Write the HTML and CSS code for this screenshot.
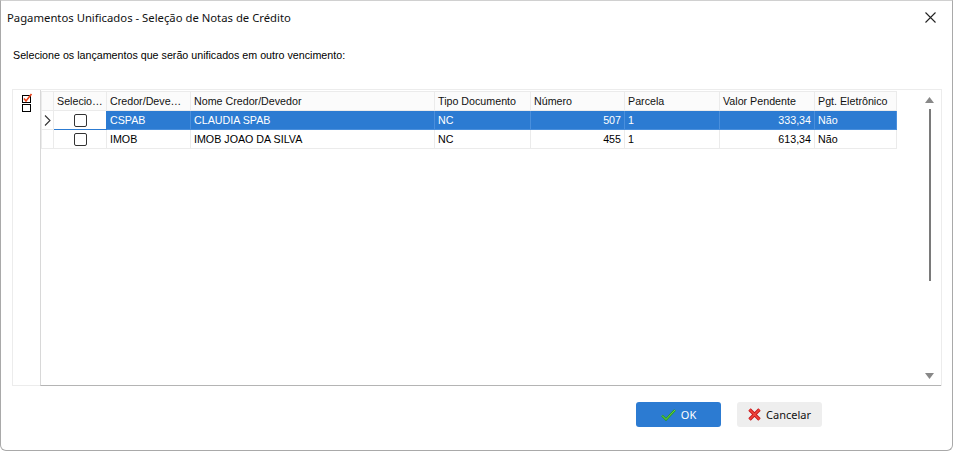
FILE: index.html
```html
<!DOCTYPE html>
<html lang="pt-BR">
<head>
    <meta charset="UTF-8">
    <title>Pagamentos Unificados - Seleção de Notas de Crédito</title>
    <link rel="stylesheet" href="styles.css">
</head>
<body>
    <div class="window">
        <div class="titlebar">
            <span class="title">Pagamentos Unificados - Seleção de Notas de Crédito</span>
            <span class="close">
                <svg width="11" height="11" viewBox="0 0 11 11"><path d="M0.5 0.5 L10.5 10.5 M10.5 0.5 L0.5 10.5" stroke="#222" stroke-width="1.1"/></svg>
            </span>
        </div>
        <div class="prompt">Selecione os lançamentos que serão unificados em outro vencimento:</div>

        <div class="panel">
            <div class="marks">
                <svg width="11" height="20" viewBox="0 0 11 20">
                    <rect x="0.5" y="2.5" width="8" height="7" fill="#fff" stroke="#000"/>
                    <path d="M2 5.5 L4 8 L9.5 1" fill="none" stroke="#e8431a" stroke-width="1.6"/>
                    <rect x="0.5" y="11.5" width="8" height="7" fill="#fff" stroke="#000"/>
                </svg>
            </div>
            <div class="grid">
                <table class="records">
                    <colgroup>
                        <col class="c-ind"><col class="c-sel"><col class="c-cred"><col class="c-nome">
                        <col class="c-tipo"><col class="c-num"><col class="c-parc"><col class="c-valor"><col class="c-pgt">
                    </colgroup>
                    <tr class="head">
                        <th></th>
                        <th>Selecio…</th>
                        <th>Credor/Deve…</th>
                        <th>Nome Credor/Devedor</th>
                        <th>Tipo Documento</th>
                        <th>Número</th>
                        <th>Parcela</th>
                        <th>Valor Pendente</th>
                        <th>Pgt. Eletrônico</th>
                    </tr>
                    <tr class="selected">
                        <td class="ind">
                            <svg width="7" height="11" viewBox="0 0 7 11"><path d="M1 0.5 L6 5.5 L1 10.5" fill="none" stroke="#333" stroke-width="1.1"/></svg>
                        </td>
                        <td class="chk focus"><span class="box"></span></td>
                        <td>CSPAB</td>
                        <td>CLAUDIA SPAB</td>
                        <td>NC</td>
                        <td class="num">507</td>
                        <td>1</td>
                        <td class="num">333,34</td>
                        <td>Não</td>
                    </tr>
                    <tr>
                        <td class="ind"></td>
                        <td class="chk"><span class="box"></span></td>
                        <td>IMOB</td>
                        <td>IMOB JOAO DA SILVA</td>
                        <td>NC</td>
                        <td class="num">455</td>
                        <td>1</td>
                        <td class="num">613,34</td>
                        <td>Não</td>
                    </tr>
                </table>
                <div class="scrollbar">
                    <svg width="9" height="6" viewBox="0 0 9 6"><path d="M4.5 0 L9 6 L0 6 Z" fill="#888"/></svg>
                    <div class="thumb"></div>
                    <svg class="down" width="9" height="6" viewBox="0 0 9 6"><path d="M0 0 L9 0 L4.5 6 Z" fill="#888"/></svg>
                </div>
            </div>
        </div>

        <div class="actions">
            <button class="btn btn-ok">
                <svg width="15" height="12" viewBox="0 0 15 12"><path d="M1 6.5 L5 10.5 L14 1" fill="none" stroke="#2a9a1e" stroke-width="2.4"/><path d="M1 6.5 L5 10.5 L14 1" fill="none" stroke="#6fdc4a" stroke-width="0.9"/></svg>
                OK
            </button>
            <button class="btn btn-cancel">
                <svg width="13" height="13" viewBox="0 0 13 13"><path d="M1.5 1.5 L11.5 11.5 M11.5 1.5 L1.5 11.5" stroke="#c4161c" stroke-width="3.4"/><path d="M1.5 1.5 L11.5 11.5 M11.5 1.5 L1.5 11.5" stroke="#f0473c" stroke-width="1.6"/></svg>
                Cancelar
            </button>
        </div>
    </div>
</body>
</html>
```

FILE: styles.css
```css
body {
    margin: 0;
    padding: 0;
    background-color: #ffffff;
    font-family: "Liberation Sans", Arial, sans-serif;
    font-size: 10.7px;
    color: #000;
}
.window {
    width: 953px;
    height: 451px;
    box-sizing: border-box;
    border: 1px solid #a9a9a9;
    border-top-color: #d0d0d0;
    border-radius: 0 0 6px 6px;
    background-color: #fff;
}
.titlebar {
    height: 33px;
    display: flex;
    align-items: center;
    justify-content: space-between;
    padding: 0 16px 0 6px;
}
.title {
    font-family: "Noto Sans", "Open Sans", sans-serif;
    font-size: 11.3px;
    color: #111;
}
.close {
    display: flex;
}
.prompt {
    margin: 15px 0 0 12px;
    height: 14px;
}
.panel {
    margin: 26px 0 0 11px;
    width: 930px;
    height: 297px;
    box-sizing: border-box;
    border: 1px solid #ececec;
    display: flex;
}
.marks {
    width: 27px;
    padding: 3px 0 0 9px;
    box-sizing: border-box;
}
.grid {
    flex: 1;
    display: flex;
    border-left: 1px solid #d8d8d8;
    border-bottom: 1px solid #b4b4b4;
    margin-bottom: -1px;
    padding-top: 1px;
}
.records {
    border-collapse: collapse;
    table-layout: fixed;
    width: 855px;
    align-self: flex-start;
}
.c-ind { width: 12px; }
.c-sel { width: 53px; }
.c-cred { width: 84px; }
.c-nome { width: 244px; }
.c-tipo { width: 96px; }
.c-num { width: 94px; }
.c-parc { width: 95px; }
.c-valor { width: 95px; }
.c-pgt { width: 82px; }
.records th, .records td {
    height: 18px;
    padding: 0 3px;
    border: 1px solid #ebebeb;
    text-align: left;
    font-weight: normal;
    white-space: nowrap;
    overflow: hidden;
}
.records th {
    background-color: #fbfbfb;
    color: #111;
}
.records td.num {
    text-align: right;
}
.records td.ind {
    padding: 0 0 0 2px;
    border-right-color: #ebebeb;
}
.records td.ind svg {
    display: block;
}
.records td.chk {
    text-align: center;
}
.box {
    display: inline-block;
    width: 11px;
    height: 11px;
    border: 1px solid #333;
    border-radius: 2px;
    vertical-align: middle;
    background: #fff;
}
.selected td {
    background-color: #2c7bd2;
    color: #fff;
    border-color: #4a8fdc;
}
.selected td.ind, .selected td.chk {
    background-color: #fff;
    color: #000;
}
.selected td.chk.focus {
    border: 1px solid #2c7bd2;
}
.selected td.ind {
    border-color: #ebebeb;
}
.scrollbar {
    margin-left: auto;
    width: 19px;
    margin-right: 2px;
    display: flex;
    flex-direction: column;
    align-items: center;
    padding-top: 6px;
}
.thumb {
    width: 2px;
    height: 172px;
    margin-top: 6px;
    background-color: #7a7a7a;
}
.scrollbar .down {
    margin-top: auto;
    margin-bottom: 6px;
}
.actions {
    display: flex;
    justify-content: flex-end;
    gap: 16px;
    margin: 16px 130px 0 0;
}
.btn {
    width: 85px;
    height: 25px;
    border: none;
    border-radius: 3px;
    font-family: "Noto Sans", "Open Sans", sans-serif;
    font-size: 11px;
    display: flex;
    align-items: center;
    justify-content: center;
    gap: 5px;
    padding: 0;
}
.btn-ok {
    background-color: #2c7bd2;
    color: #fff;
}
.btn-cancel {
    background-color: #eeeeee;
    color: #111;
}
```
